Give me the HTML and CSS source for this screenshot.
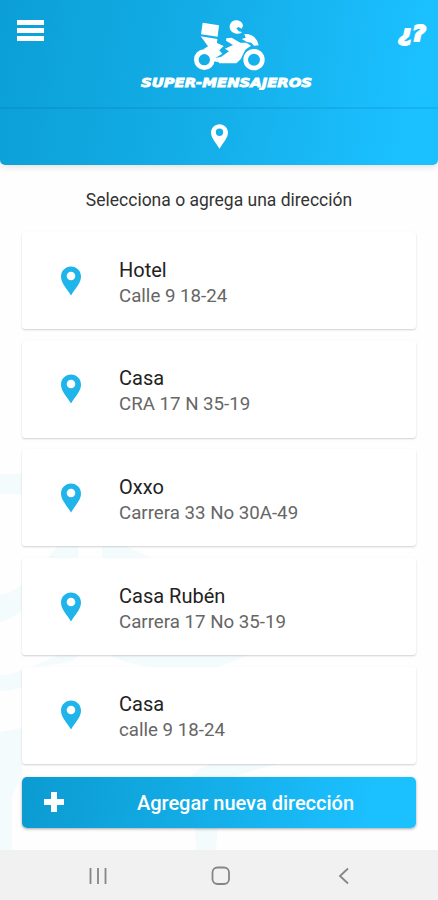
FILE: index.html
```
<!DOCTYPE html>
<html lang="es">
<head>
    <meta charset="UTF-8">
    <meta name="viewport" content="width=device-width, initial-scale=1.0">
    <title>Super-Mensajeros</title>
    <link rel="stylesheet" href="styles.css">
</head>
<body>

    <!-- Shared icons -->
    <svg class="sprite">
        <symbol id="pin" viewBox="0 0 20 29">
            <path fill-rule="evenodd" d="M10 0C4.400 0 0 4.400 0 9.900c0 6.500 5.500 11.500 10 19.100 4.500-7.600 10-12.600 10-19.100C20 4.400 15.600 0 10 0zm0 5.200a4.300 4.300 0 1 1 0 8.600 4.300 4.300 0 0 1 0-8.600z"/>
        </symbol>
    </svg>

    <header class="header">
        <div class="topbar">
            <button class="menu" aria-label="Menú">
                <span></span>
                <span></span>
                <span></span>
            </button>
            <div class="brand">
                <svg class="brand-logo" viewBox="0 0 228 174">
                    <g fill="none" stroke="#fff" stroke-width="14">
                        <circle cx="37" cy="131" r="24"/>
                        <circle cx="186" cy="131" r="25"/>
                    </g>
                    <g fill="#fff">
                        <!-- box -->
                        <path d="M32 20l49 8-4 34-50-7z"/>
                        <!-- tail -->
                        <path d="M26 61l50 8-1 12 20 9-13 13 9 10-20 12 8 14-16-4-10-24-18-12 13-8z"/>
                        <!-- rider and engine -->
                        <path d="M103 67l16-2 26 15h18l14 9-17 12-14 29-13 12H82l-12-16 18-4 23-16-12-8 24-11-21-13z"/>
                        <!-- helmet -->
                        <path d="M113 33c0-12 9-20 20-20s19 7 20 16l-4 9-9-5-7 4 7 9 10 2-4 4c-14 5-33-3-33-19z"/>
                        <!-- fairing -->
                        <path d="M157 54c23-1 39 12 43 34l-14 1-8-9-13-2-16-9 12-4z"/>
                    </g>
                </svg>
                <svg class="brand-name" viewBox="0 0 176 16">
                    <text x="2" y="12.500" textLength="171" lengthAdjust="spacingAndGlyphs">SUPER-MENSAJEROS</text>
                </svg>
            </div>
            <button class="help">
                <svg viewBox="0 0 32 28">
                    <text x="2" y="21" textLength="28" lengthAdjust="spacingAndGlyphs">¿?</text>
                </svg>
            </button>
        </div>
        <div class="tab">
            <svg class="tab-pin"><use href="#pin"/></svg>
        </div>
    </header>

    <main class="content">
        <!-- Faint background artwork -->
        <svg class="watermark" viewBox="0 0 438 400">
            <path d="M0 24h22v20H0zM58 96h20v14H46zM102 96h24l30 14h-54zM0 145c8-1 16-5 22-11v26c-6 6-14 10-22 12zM30 218l28-13h22l-10 7zM110 205h138l-30 12h-60c-20-1-36-5-48-12zM0 225c8 0 15-2 22-5v17c-7 3-14 4-22 4zM0 282l22-4v48l-10 20v54H0zM190 327c6-6 12-11 22-13h66l-24 6-24 8zM195 370h23l-2 30h-20z"/>
        </svg>

        <p class="title">Selecciona o agrega una dirección</p>

        <ul class="list">
            <li class="card">
                <svg class="card-pin"><use href="#pin"/></svg>
                <div class="card-text">
                    <h3>Hotel</h3>
                    <p>Calle 9 18-24</p>
                </div>
            </li>
            <li class="card">
                <svg class="card-pin"><use href="#pin"/></svg>
                <div class="card-text">
                    <h3>Casa</h3>
                    <p>CRA 17 N 35-19</p>
                </div>
            </li>
            <li class="card">
                <svg class="card-pin"><use href="#pin"/></svg>
                <div class="card-text">
                    <h3>Oxxo</h3>
                    <p>Carrera 33 No 30A-49</p>
                </div>
            </li>
            <li class="card">
                <svg class="card-pin"><use href="#pin"/></svg>
                <div class="card-text">
                    <h3>Casa Rubén</h3>
                    <p>Carrera 17 No 35-19</p>
                </div>
            </li>
            <li class="card">
                <svg class="card-pin"><use href="#pin"/></svg>
                <div class="card-text">
                    <h3>Casa</h3>
                    <p>calle 9 18-24</p>
                </div>
            </li>
        </ul>

        <button class="add">
            <svg class="add-icon" viewBox="0 0 20 20"><path d="M7 0h6v7h7v6h-7v7H7v-7H0V7h7z"/></svg>
            <span>Agregar nueva dirección</span>
        </button>
    </main>

    <!-- Android navigation bar -->
    <nav class="navbar">
        <svg viewBox="0 0 20 20"><path d="M2.500 2v16M10 2v16M17.500 2v16"/></svg>
        <svg viewBox="0 0 20 20"><rect x="1.500" y="1.500" width="16.500" height="16.500" rx="5"/></svg>
        <svg viewBox="0 0 20 20"><path d="M14 2.500L6 10l8 7.500"/></svg>
    </nav>

</body>
</html>
```
FILE: styles.css
```
* {
    box-sizing: border-box;
}

body {
    font-family: Roboto, sans-serif;
    background-color: #fefefe;
    margin: 0;
    height: 900px;
    display: flex;
    flex-direction: column;
    overflow: hidden;
}

button {
    border: none;
    background: none;
    padding: 0;
    color: #fff;
    font-family: inherit;
    cursor: pointer;
}

h3,
p,
ul {
    margin: 0;
    padding: 0;
    font-weight: normal;
}

.sprite {
    display: none;
}

.header {
    height: 165px;
    background: linear-gradient(100deg, #0b9fd6 0%, #14aee8 48%, #1bc0ff 92%);
    border-radius: 0 0 5px 5px;
    box-shadow: 0 2px 7px rgba(0, 0, 0, 0.12);
}

.topbar {
    height: 109px;
    padding: 20px 10px 0 17px;
    display: flex;
    justify-content: space-between;
    align-items: flex-start;
    border-bottom: 2px solid rgba(0, 90, 150, 0.14);
}

.menu {
    width: 27px;
    display: flex;
    flex-direction: column;
    gap: 3px;
}

.menu span {
    height: 5px;
    width: 27px;
    background-color: #fff;
}

.brand {
    display: flex;
    flex-direction: column;
    align-items: center;
    margin-left: 13px;
    margin-top: -4px;
}

.brand-logo {
    width: 76px;
    height: 58px;
    margin-left: 6px;
}

.brand-name {
    width: 176px;
    height: 16px;
}

.brand-name text,
.help text {
    fill: #fff;
    stroke: #fff;
    stroke-width: 0.9;
    font-family: "DejaVu Sans", sans-serif;
    font-size: 13px;
    font-weight: bold;
    font-style: italic;
}

.help svg {
    display: block;
    width: 32px;
    height: 28px;
}

.help text {
    stroke-width: 1.8;
    font-size: 22px;
}

.tab {
    height: 56px;
    display: flex;
    justify-content: center;
    align-items: center;
}

.tab-pin {
    width: 17px;
    height: 25px;
    margin-top: -2px;
    fill: #fff;
}

.content {
    height: 685px;
    padding: 0 22px;
    position: relative;
}

.watermark {
    position: absolute;
    left: 0;
    bottom: 0;
    width: 438px;
    height: 400px;
    fill: #f3fbfd;
    z-index: -1;
}

.title {
    padding-top: 24px;
    font-size: 17.5px;
    line-height: 22px;
    text-align: center;
    color: #333;
}

.list {
    list-style: none;
    margin-top: 21px;
    display: flex;
    flex-direction: column;
    gap: 11.7px;
}

.card {
    height: 97px;
    display: flex;
    align-items: center;
    background-color: #fff;
    border-radius: 3px;
    box-shadow: 0 1px 2px rgba(0, 0, 0, 0.18);
}

.card-pin {
    width: 20px;
    height: 30px;
    margin: 0 38px 0 39px;
    fill: #1fb5ea;
}

.card-text {
    padding-top: 4px;
}

.card h3 {
    font-size: 20px;
    line-height: 26px;
    color: #222;
}

.card p {
    font-size: 18.7px;
    line-height: 26px;
    color: #666;
}

.add {
    width: 100%;
    height: 51px;
    margin-top: 13px;
    padding-left: 22px;
    display: flex;
    align-items: center;
    background: linear-gradient(100deg, #0b9bd1 0%, #14aee8 48%, #1bc0ff 88%);
    border-radius: 5px;
    box-shadow: 0 1px 3px rgba(0, 0, 0, 0.35);
}

.add-icon {
    width: 20px;
    height: 20px;
    fill: #fff;
}

.add span {
    flex: 1;
    padding: 2px 0 0 11px;
    font-size: 20px;
    font-weight: 500;
}

.navbar {
    height: 50px;
    padding: 2px 84px 0 88px;
    display: flex;
    justify-content: space-between;
    align-items: center;
    background-color: #f1f1f1;
}

.navbar svg {
    width: 20px;
    height: 20px;
    fill: none;
    stroke: #858585;
    stroke-width: 1.8;
}
```
